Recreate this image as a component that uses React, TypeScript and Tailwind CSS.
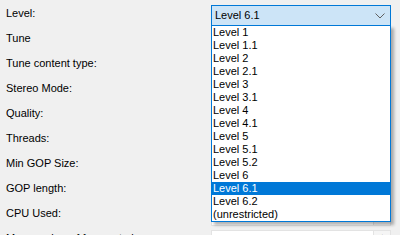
const labels = [
  'Level:',
  'Tune',
  'Tune content type:',
  'Stereo Mode:',
  'Quality:',
  'Threads:',
  'Min GOP Size:',
  'GOP length:',
  'CPU Used:',
  'Max number of frames to lag:',
];

const levels = [
  'Level 1',
  'Level 1.1',
  'Level 2',
  'Level 2.1',
  'Level 3',
  'Level 3.1',
  'Level 4',
  'Level 4.1',
  'Level 5',
  'Level 5.1',
  'Level 5.2',
  'Level 6',
  'Level 6.1',
  'Level 6.2',
  '(unrestricted)',
];

const selected = 'Level 6.1';

const Chevron = () => (
  <svg width="10" height="6" viewBox="0 0 10 6" className="shrink-0">
    <path d="M0.5 0.5 L5 5 L9.5 0.5" fill="none" stroke="#606060" strokeWidth="1" />
  </svg>
);

const App = () => {
  return (
    <div
      className="relative w-[400px] h-[235px] overflow-hidden bg-[#f0f0f0] text-[11px] leading-[13px] text-black"
      style={{ fontFamily: '"Liberation Sans", Arial, sans-serif' }}
    >
      {/* Form rows */}
      <div className="flex flex-col gap-[4px] pt-[5px] pl-[6px]">
        {labels.map((label, i) => (
          <div key={label} className="flex h-[21px] items-start">
            <span className="w-[205px] pt-[2px] whitespace-nowrap">{label}</span>
            {i === 0 ? (
              <div className="flex h-[21px] w-[180px] items-center justify-between border border-[#0078d7] bg-[#cce4f7] pl-[3px] pr-[5px]">
                <span>{selected}</span>
                <Chevron />
              </div>
            ) : (
              <div className="flex h-[21px] w-[180px] border border-[#e3e3e3] bg-white">
                <div className="flex-1" />
                <div className="flex w-[17px] justify-center border-l border-[#e3e3e3] bg-[#f5f5f5] text-[9px] leading-[10px]">
                  ▴
                </div>
              </div>
            )}
          </div>
        ))}
      </div>

      {/* Open dropdown list */}
      <div className="absolute left-[211px] top-[25px] w-[180px] border border-[#0078d7] bg-white shadow-[3px_3px_3px_rgba(0,0,0,0.3)]">
        {levels.map((lvl) => (
          <div
            key={lvl}
            className={`h-[13px] pl-[1px] whitespace-nowrap ${
              lvl === selected ? 'bg-[#0078d7] text-white' : ''
            }`}
          >
            {lvl}
          </div>
        ))}
      </div>
    </div>
  );
};

export default App;
